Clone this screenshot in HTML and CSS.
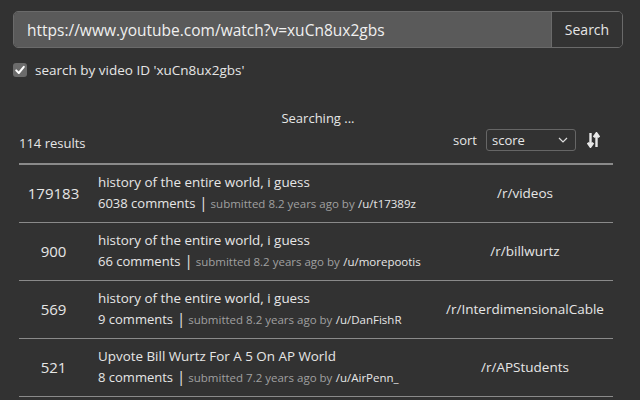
FILE: index.html
```html
<!DOCTYPE html>
<html lang="en">
<head>
<meta charset="utf-8">
<title>Reddit search</title>
<link rel="stylesheet" href="styles.css">
</head>
<body>
<div class="page">
  <form class="search">
    <input class="search-input" type="text" value="https://www.youtube.com/watch?v=xuCn8ux2gbs">
    <button class="search-btn" type="button">Search</button>
  </form>
  <label class="check-row">
    <span class="check-box"><svg viewBox="0 0 14 14" width="14" height="14"><path d="M3.2 7.4 L5.8 10 L10.8 3.8" fill="none" stroke="#fff" stroke-width="2" stroke-linecap="round" stroke-linejoin="round"/></svg></span>
    <span class="check-label">search by video ID 'xuCn8ux2gbs'</span>
  </label>
  <div class="status">Searching ...</div>
  <div class="results-head">
    <div class="count">114 results</div>
    <div class="sort">
      <span class="sort-label">sort</span>
      <div class="select"><span>score</span><svg viewBox="0 0 10 6" width="10" height="6"><path d="M1 1 L5 5 L9 1" fill="none" stroke="#ddd" stroke-width="1.2"/></svg></div>
      <svg class="sort-icon" viewBox="0 0 13 16" width="13" height="16"><path d="M3.5 1 V14 M0.8 10.8 L3.5 14.6 L6.2 10.8" fill="none" stroke="#e8e8e8" stroke-width="2.4"/><path d="M9.5 15 V2 M6.8 5.2 L9.5 1.4 L12.2 5.2" fill="none" stroke="#e8e8e8" stroke-width="2.4"/></svg>
    </div>
  </div>
  <div class="table">
    <div class="row">
      <div class="score">179183</div>
      <div class="info">
        <div class="title">history of the entire world, i guess</div>
        <div class="meta"><span class="comments">6038 comments</span><span class="sep">|</span><span class="sub">submitted 8.2 years ago by</span> <span class="user">/u/t17389z</span></div>
      </div>
      <div class="subreddit">/r/videos</div>
    </div>
    <div class="row">
      <div class="score">900</div>
      <div class="info">
        <div class="title">history of the entire world, i guess</div>
        <div class="meta"><span class="comments">66 comments</span><span class="sep">|</span><span class="sub">submitted 8.2 years ago by</span> <span class="user">/u/morepootis</span></div>
      </div>
      <div class="subreddit">/r/billwurtz</div>
    </div>
    <div class="row">
      <div class="score">569</div>
      <div class="info">
        <div class="title">history of the entire world, i guess</div>
        <div class="meta"><span class="comments">9 comments</span><span class="sep">|</span><span class="sub">submitted 8.2 years ago by</span> <span class="user">/u/DanFishR</span></div>
      </div>
      <div class="subreddit">/r/InterdimensionalCable</div>
    </div>
    <div class="row">
      <div class="score">521</div>
      <div class="info">
        <div class="title">Upvote Bill Wurtz For A 5 On AP World</div>
        <div class="meta"><span class="comments">8 comments</span><span class="sep">|</span><span class="sub">submitted 7.2 years ago by</span> <span class="user">/u/AirPenn_</span></div>
      </div>
      <div class="subreddit">/r/APStudents</div>
    </div>
  </div>
</div>
</body>
</html>
```
FILE: styles.css
```css
html, body {
  margin: 0;
  padding: 0;
  background: #323232;
  color: #e6e6e6;
  font-family: "Open Sans", "Noto Sans", sans-serif;
  overflow: hidden;
}
.page {
  padding: 11px 17px 0 13px;
}
.search {
  display: flex;
  height: 37px;
  border: 1px solid #6a6a6a;
  border-radius: 5px;
  overflow: hidden;
  box-sizing: border-box;
  margin: 0;
}
.search-input {
  flex: 1;
  border: 0;
  margin: 0;
  background: #5a5a5a;
  color: #f0f0f0;
  font-family: inherit;
  font-size: 15.5px;
  padding: 0 0 0 13px;
  outline: none;
}
.search-btn {
  width: 71px;
  border: 0;
  border-left: 1px solid #6a6a6a;
  background: #333;
  color: #e6e6e6;
  font-family: inherit;
  font-size: 14px;
  padding: 0;
}
.check-row {
  display: flex;
  align-items: center;
  gap: 8px;
  margin-top: 14px;
  height: 16px;
  font-size: 13.5px;
}
.check-box {
  width: 14px;
  height: 14px;
  border-radius: 3px;
  background: #6b6b6b;
  display: flex;
}
.status {
  text-align: center;
  font-size: 13px;
  margin-top: 31px;
  line-height: 18px;
}
.results-head {
  display: flex;
  justify-content: space-between;
  align-items: center;
  margin: 0 23px 0 6px;
  height: 26px;
}
.count {
  font-size: 13px;
  padding-top: 6px;
}
.sort {
  display: flex;
  align-items: center;
}
.sort-label {
  font-size: 13px;
  margin-right: 9px;
}
.select {
  width: 90px;
  height: 22px;
  box-sizing: border-box;
  border: 1px solid #666;
  border-radius: 3px;
  display: flex;
  align-items: center;
  justify-content: space-between;
  padding: 0 7px 0 5px;
  font-size: 13px;
}
.sort-icon {
  margin-left: 11px;
}
.table {
  margin: 10px 10px 0 6px;
  border-top: 2px solid #8a8a8a;
}
.row {
  display: flex;
  align-items: center;
  height: 58px;
  padding-bottom: 1px;
  border-bottom: 1px solid #8a8a8a;
  box-sizing: border-box;
}
.score {
  width: 69px;
  text-align: center;
  font-size: 15px;
  padding-bottom: 1px;
}
.info {
  flex: 1;
  padding-left: 10px;
  display: flex;
  flex-direction: column;
  gap: 1px;
}
.title {
  font-size: 13.4px;
  line-height: 19px;
}
.meta {
  font-size: 13px;
  line-height: 19px;
  white-space: nowrap;
}
.sep {
  margin: 0 3px 0 4px;
  font-size: 15px;
}
.sub {
  color: #a0a0a0;
  font-size: 11.5px;
}
.user {
  font-size: 11.5px;
  color: #e6e6e6;
}
.subreddit {
  width: 176px;
  text-align: center;
  font-size: 13.5px;
  padding-bottom: 1px;
}
```
